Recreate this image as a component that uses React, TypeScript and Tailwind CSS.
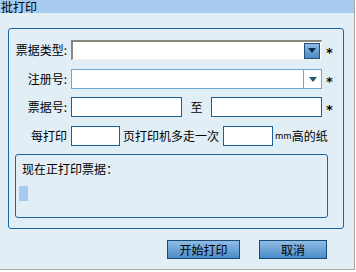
const cjk = "font-['Noto_Sans_CJK_SC','Noto_Sans',sans-serif]";

function Asterisk() {
  return (
    <span className="ml-[4px] h-[20px] pt-[6px] font-['DejaVu_Sans',sans-serif] text-[13px] leading-[14px] font-bold text-black">
      *
    </span>
  );
}

function Label({ text, width = "w-[62px]" }: { text: string; width?: string }) {
  return (
    <span className={`${width} shrink-0 pr-[4px] text-right text-[12px] leading-[14px] text-black`}>{text}</span>
  );
}

function Triangle({ color }: { color: string }) {
  return (
    <svg width="8" height="5" viewBox="0 0 8 5">
      <path d="M0 0H8L4 5Z" fill={color} />
    </svg>
  );
}

export default function App() {
  return (
    <div className={`h-[272px] w-[356px] bg-white ${cjk}`}>
      <div className="flex h-[270px] w-[355px] flex-col border-r border-b border-[#a9a89c] bg-[#e1eef5]">
        <div className="flex h-[13px] shrink-0 items-center bg-[#a6caf0] pl-[1px]">
          <span className="text-[12px] leading-[12px] text-black">批打印</span>
        </div>

        <div className="mt-[15px] ml-[8px] flex h-[201px] w-[336px] flex-col rounded-[3px] border border-[#1b64a0]">
          {/* 票据类型 */}
          <div className="mt-[11px] flex h-[20px] items-center">
            <Label text="票据类型:" />
            <div className="flex h-[20px] w-[251px] items-center justify-end border-t-2 border-l-2 border-t-[#8a887c] border-l-[#8a887c] border-r border-b border-r-[#f1efe2] border-b-[#f1efe2] bg-white pr-[1px]">
              <div className="flex h-[16px] w-[16px] items-center justify-center border border-[#24507a] bg-gradient-to-b from-[#8cb8e2] to-[#4a88c4]">
                <Triangle color="#0d2c4c" />
              </div>
            </div>
            <Asterisk />
          </div>

          {/* 注册号 */}
          <div className="mt-[9px] flex h-[20px] items-center">
            <Label text="注册号:" />
            <div className="flex h-[20px] w-[251px] items-center justify-end border border-[#6ea6d6] bg-white">
              <div className="flex h-full w-[18px] items-center justify-center border-l border-[#6ea6d6]">
                <Triangle color="#22596b" />
              </div>
            </div>
            <Asterisk />
          </div>

          {/* 票据号 */}
          <div className="mt-[8px] flex h-[20px] items-center">
            <Label text="票据号:" />
            <div className="h-[20px] w-[111px] border border-[#1b5f97] bg-white" />
            <span className="w-[29px] text-center text-[12px] leading-[14px] text-black">至</span>
            <div className="h-[20px] w-[111px] border border-[#1b5f97] bg-white" />
            <Asterisk />
          </div>

          {/* 每打印 */}
          <div className="mt-[9px] flex h-[20px] items-center">
            <Label text="每打印" width="w-[62px]" />
            <div className="h-[20px] w-[49px] border border-[#1b5f97] bg-white" />
            <span className="ml-[3px] text-[12px] leading-[14px] text-black">页打印机多走一次</span>
            <div className="ml-[4px] h-[20px] w-[50px] border border-[#1b5f97] bg-white" />
            <span className="ml-[2px] text-[9px] leading-[14px] text-black">mm</span>
            <span className="text-[12px] leading-[14px] text-black">高的纸</span>
          </div>

          {/* 现在正打印票据 */}
          <div className="mt-[8px] ml-[6px] flex h-[64px] w-[313px] flex-col rounded-[3px] border border-[#1b64a0] px-[3px] pt-[7px]">
            <span className="ml-[3px] text-[12px] leading-[14px] text-black">现在正打印票据：</span>
            <div className="mt-[10px] h-[15px] w-[9px] bg-[#a7cbef]" />
          </div>
        </div>

        <div className="mt-[11px] flex items-center">
          <button className="ml-[167px] h-[19px] w-[73px] border border-[#174a74] bg-gradient-to-b from-[#90bce4] to-[#4a8cc8] text-[12px] leading-[14px] text-black">
            开始打印
          </button>
          <button className="ml-[19px] h-[19px] w-[68px] border border-[#174a74] bg-gradient-to-b from-[#90bce4] to-[#4a8cc8] text-[12px] leading-[14px] text-black">
            取消
          </button>
        </div>
      </div>
    </div>
  );
}
